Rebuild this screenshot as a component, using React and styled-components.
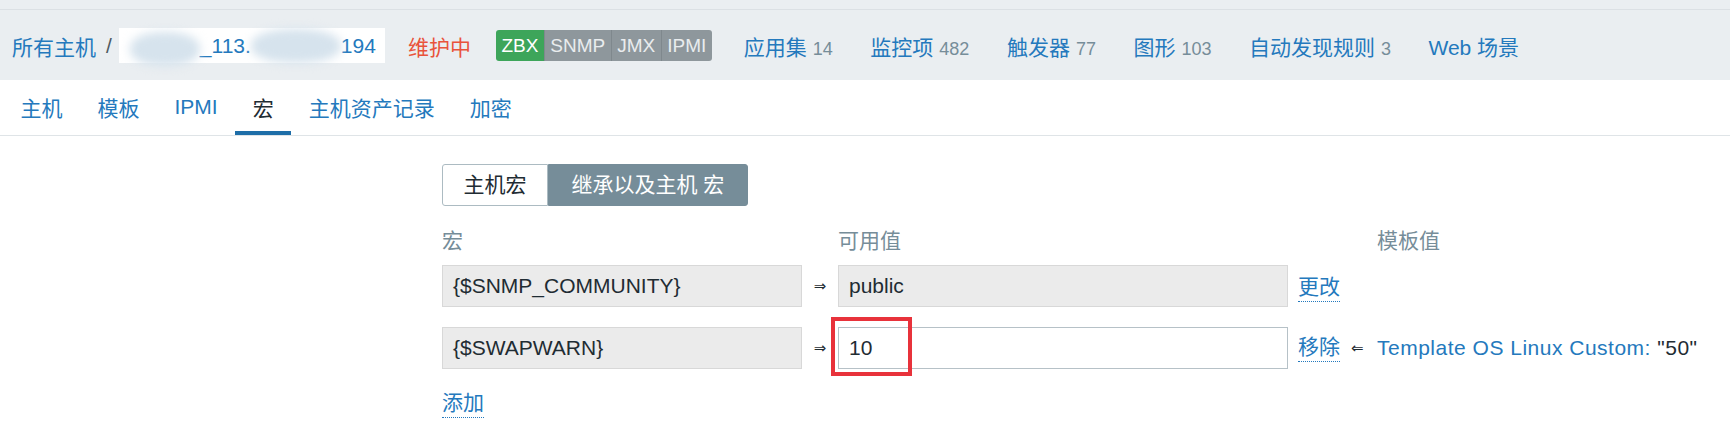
import React from 'react';
import styled, { createGlobalStyle } from 'styled-components';

const GlobalStyle = createGlobalStyle`
  html, body { margin: 0; padding: 0; background: #fff; }
  body {
    font-family: "Liberation Sans", Arial, "Noto Sans CJK SC", sans-serif;
    font-size: 21px;
    color: #1f2c33;
  }
  * { box-sizing: border-box; }
`;

const blue = '#2479bd';
const grey = '#768d99';

const TopStrip = styled.div`
  height: 10px;
  background: #eaeef1;
  border-bottom: 1px solid #dbe0e4;
`;

const Header = styled.div`
  height: 70px;
  display: flex;
  align-items: center;
  padding: 1px 0 0 12px;
  background: #eaeef1;
  white-space: nowrap;
`;

const Crumb = styled.span`
  color: ${blue};
`;

const Slash = styled.span`
  color: #4f5b62;
  margin: 0 7px 0 10px;
`;

const HostBox = styled.div`
  height: 35px;
  display: flex;
  align-items: center;
  padding: 0 9px 0 11px;
  background: #fff;
  color: ${blue};
`;

const Blur = styled.span`
  display: inline-block;
  width: ${p => p.$w}px;
  height: 34px;
  margin-top: ${p => p.$down || 0}px;
  border-radius: 45%;
  background: #d6e3ed;
  filter: blur(5px);
`;

const Maint = styled.span`
  color: #e9533b;
  margin-left: 23px;
`;

const Tags = styled.div`
  display: flex;
  margin-left: 25px;
  height: 31px;
  border-radius: 3px;
  overflow: hidden;
`;

const Tag = styled.span`
  padding: 0 5.5px;
  line-height: 31px;
  font-size: 19px;
  color: ${p => (p.$on ? '#fff' : '#e9ecee')};
  background: ${p => (p.$on ? '#3da55a' : '#8e979c')};
  & + & { border-left: 1px solid #7f888d; }
`;

const Nav = styled.div`
  display: flex;
  gap: 37.5px;
  margin-left: 32px;
`;

const NavLink = styled.span`
  color: ${blue};
`;

const Count = styled.span`
  color: ${grey};
  font-size: 18px;
  margin-left: 6px;
`;

const TabBar = styled.div`
  height: 56px;
  display: flex;
  padding-left: 3px;
  background: #fff;
  border-bottom: 1px solid #dfe4e7;
`;

const Tab = styled.div`
  display: flex;
  align-items: center;
  padding: 0 17.5px;
  border-top: 2px solid transparent;
  border-bottom: 4px solid ${p => (p.$active ? '#1e6ea8' : 'transparent')};
  color: ${p => (p.$active ? '#1f2c33' : blue)};
`;

const Content = styled.div`
  padding: 28px 0 0 442px;
`;

const RadioGroup = styled.div`
  display: inline-flex;
  height: 42px;
`;

const Radio = styled.span`
  padding: 0 ${p => (p.$active ? 22.5 : 20.5)}px;
  line-height: 40px;
  border: 1px solid ${p => (p.$active ? grey : '#acbbc2')};
  background: ${p => (p.$active ? grey : '#fff')};
  color: ${p => (p.$active ? '#fff' : '#1f2c33')};
  border-radius: ${p => (p.$active ? '0 3px 3px 0' : '3px 0 0 3px')};
`;

const Row = styled.div`
  display: grid;
  grid-template-columns: 360px 36px 450px 89px auto;
  margin-top: ${p => p.$top}px;
  height: ${p => p.$h}px;
  white-space: nowrap;
`;

const ColHead = styled.div`
  color: ${grey};
  line-height: 24px;
`;

const Input = styled.div`
  height: 42px;
  display: flex;
  align-items: center;
  padding: 0 10px;
  border: 1px solid ${p => (p.$ro ? '#d8d8d8' : '#b6c1c7')};
  background: ${p => (p.$ro ? '#ebebeb' : '#fff')};
  color: #1f2c33;
`;

const Arrow = styled.div`
  display: flex;
  align-items: center;
  justify-content: center;
  font-family: "DejaVu Sans", sans-serif;
  font-size: 15px;
  color: #1f2c33;
`;

const ValueCell = styled.div`
  position: relative;
`;

const Highlight = styled.div`
  position: absolute;
  left: -7px;
  top: -10px;
  width: 81px;
  height: 59px;
  border: 4px solid #e8323b;
`;

const Action = styled.div`
  display: flex;
  align-items: flex-start;
  gap: 11px;
  padding-left: 10px;
`;

const DotLink = styled.span`
  display: inline-block;
  margin-top: ${p => p.$top ?? 8}px;
  line-height: 28px;
  color: ${blue};
  border-bottom: 1px dotted ${blue};
`;

const BackArrow = styled.span`
  align-self: center;
  font-family: "DejaVu Sans", sans-serif;
  font-size: 15px;
  color: #1f2c33;
`;

const TemplateCell = styled.div`
  display: flex;
  align-items: center;
  letter-spacing: 0.5px;
`;

const TemplateLink = styled.span`
  color: ${blue};
`;

export default function App() {
  return (
    <>
      <GlobalStyle />
      <TopStrip />
      <Header>
        <Crumb>所有主机</Crumb>
        <Slash>/</Slash>
        <HostBox>
          <Blur $w={70} $down={6} />
          <span>_113.</span>
          <Blur $w={90} />
          <span>194</span>
        </HostBox>
        <Maint>维护中</Maint>
        <Tags>
          <Tag $on>ZBX</Tag>
          <Tag>SNMP</Tag>
          <Tag>JMX</Tag>
          <Tag>IPMI</Tag>
        </Tags>
        <Nav>
          <NavLink>应用集<Count>14</Count></NavLink>
          <NavLink>监控项<Count>482</Count></NavLink>
          <NavLink>触发器<Count>77</Count></NavLink>
          <NavLink>图形<Count>103</Count></NavLink>
          <NavLink>自动发现规则<Count>3</Count></NavLink>
          <NavLink>Web 场景</NavLink>
        </Nav>
      </Header>
      <TabBar>
        <Tab>主机</Tab>
        <Tab>模板</Tab>
        <Tab>IPMI</Tab>
        <Tab $active>宏</Tab>
        <Tab>主机资产记录</Tab>
        <Tab>加密</Tab>
      </TabBar>
      <Content>
        <RadioGroup>
          <Radio>主机宏</Radio>
          <Radio $active>继承以及主机 宏</Radio>
        </RadioGroup>
        <Row $top={23} $h={24}>
          <ColHead>宏</ColHead>
          <div />
          <ColHead>可用值</ColHead>
          <div />
          <ColHead>模板值</ColHead>
        </Row>
        <Row $top={12} $h={42}>
          <Input $ro>{'{$SNMP_COMMUNITY}'}</Input>
          <Arrow>⇒</Arrow>
          <Input $ro>public</Input>
          <Action>
            <DotLink>更改</DotLink>
          </Action>
          <div />
        </Row>
        <Row $top={20} $h={42}>
          <Input $ro>{'{$SWAPWARN}'}</Input>
          <Arrow>⇒</Arrow>
          <ValueCell>
            <Input>10</Input>
            <Highlight />
          </ValueCell>
          <Action>
            <DotLink $top={6}>移除</DotLink>
            <BackArrow>⇐</BackArrow>
          </Action>
          <TemplateCell>
            <TemplateLink>Template OS Linux Custom: </TemplateLink>
            <span>&nbsp;"50"</span>
          </TemplateCell>
        </Row>
        <Row $top={20} $h={29}>
          <div>
            <DotLink $top={0}>添加</DotLink>
          </div>
        </Row>
      </Content>
    </>
  );
}
